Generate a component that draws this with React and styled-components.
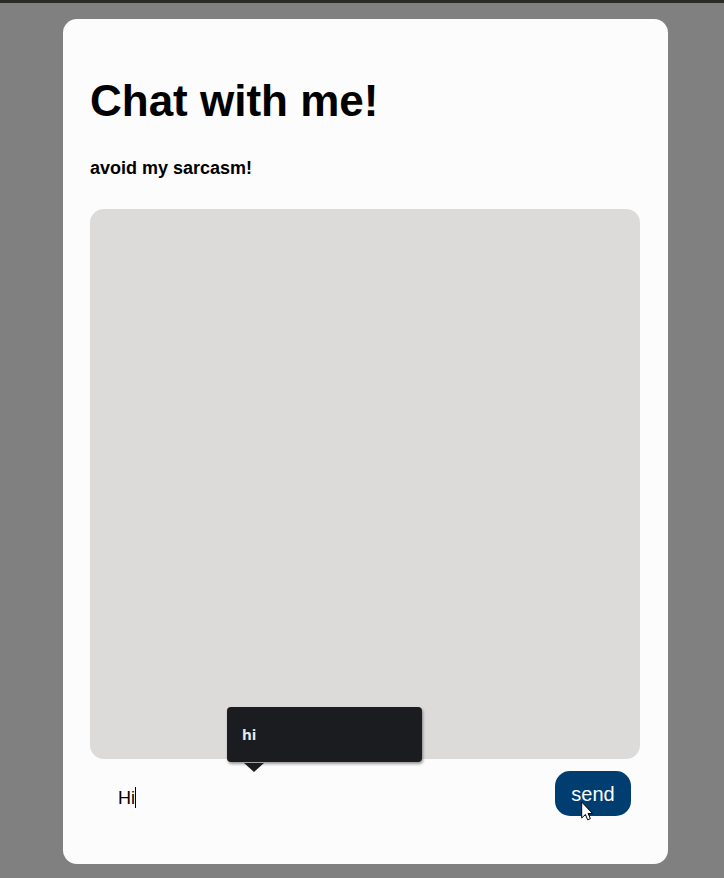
import React, { useState } from "react";
import styled, { createGlobalStyle } from "styled-components";

const GlobalStyle = createGlobalStyle`
  * { box-sizing: border-box; }
  body {
    margin: 0;
    background: #808080;
    color: #000;
    font-family: "Liberation Sans", Arial, sans-serif;
  }
`;

const Page = styled.div`
  min-height: 100vh;
  padding: 16px 56px 14px 63px;
  border-top: 3px solid #2a2a26;
`;

const Card = styled.main`
  padding: 56px 28px 48px 27px;
  border-radius: 14px;
  background: #fcfcfc;
`;

const Title = styled.h1`
  margin: 0;
  font-size: 44px;
  line-height: 52px;
`;

const Subtitle = styled.h2`
  margin: 30px 0;
  font-size: 18px;
  line-height: 22px;
`;

const Messages = styled.section`
  height: 550px;
  border-radius: 14px;
  background: #dddada;
`;

const Composer = styled.form`
  position: relative;
  display: flex;
  align-items: flex-start;
  gap: 12px;
  padding: 12px 9px 0 0;
`;

const MessageField = styled.div`
  display: flex;
  align-items: center;
  flex: 1;
  min-width: 0;
  height: 45px;
  padding: 8px 28px 0;
`;

const MessageInput = styled.input`
  width: 100%;
  padding: 0;
  border: 0;
  outline: 0;
  background: transparent;
  color: #000;
  font: 18px/22px "Liberation Sans", Arial, sans-serif;
`;

const Caret = styled.span`
  position: absolute;
  left: 45px;
  top: 28px;
  width: 1px;
  height: 21px;
  background: #000;
`;

const SendButton = styled.button`
  position: relative;
  flex: none;
  width: 76px;
  height: 45px;
  padding: 0;
  border: 0;
  border-radius: 15px;
  background: #003d70;
  color: #fff;
  font: 20px/24px "Liberation Sans", Arial, sans-serif;
`;

const Pointer = styled.svg`
  position: absolute;
  left: 26px;
  top: 30px;
  width: 12px;
  height: 20px;
`;

const Suggestion = styled.div`
  position: absolute;
  left: 137px;
  bottom: 54px;
  width: 195px;
  padding: 17px 15px;
  border-radius: 4px;
  background: #1b1c1f;
  box-shadow: 1px 2px 3px #0006;
  color: #e8eaed;
  font: 700 15px/21px "Open Sans", sans-serif;

  &::after {
    content: "";
    position: absolute;
    left: 17px;
    top: 100%;
    margin-top: 1px;
    border: 10px solid transparent;
    border-top: 9px solid #1b1c1f;
    border-bottom: 0;
  }
`;

export default function App() {
  const [message, setMessage] = useState("Hi");

  return (
    <>
      <GlobalStyle />
      <Page>
        <Card>
          <Title>Chat with me!</Title>
          <Subtitle>avoid my sarcasm!</Subtitle>
          <Messages aria-label="Messages" />
          <Composer onSubmit={(event) => event.preventDefault()}>
            <MessageField>
              <MessageInput
                aria-label="Message"
                value={message}
                onChange={(event) => setMessage(event.target.value)}
              />
              <Caret />
            </MessageField>
            <Suggestion>hi</Suggestion>
            <SendButton type="submit">
              send
              <Pointer viewBox="0 0 12 20" aria-hidden="true">
                <path
                  d="M.7 1v16l3.7-3.5 2.3 5.3 2.7-1.2-2.3-5.1h4.4z"
                  fill="#fff"
                  stroke="#000"
                />
              </Pointer>
            </SendButton>
          </Composer>
        </Card>
      </Page>
    </>
  );
}
